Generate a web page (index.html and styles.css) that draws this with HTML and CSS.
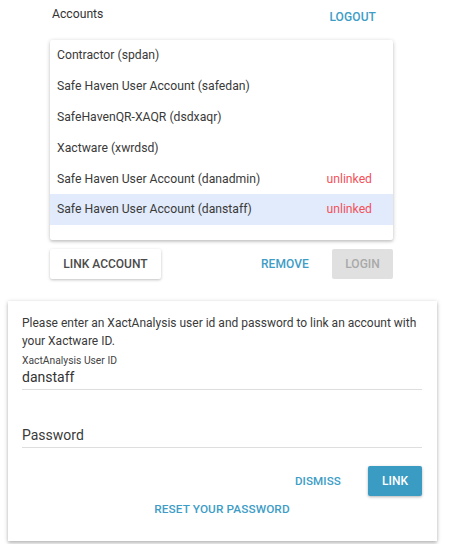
FILE: index.html
```html
<!DOCTYPE html>
<html>
<head>
<meta charset="utf-8">
<link rel="stylesheet" href="styles.css">
</head>
<body>
<div class="accounts">
  <div class="header">
    <span class="title">Accounts</span>
    <span class="link-btn logout">LOGOUT</span>
  </div>
  <div class="list">
    <div class="row"><span>Contractor (spdan)</span></div>
    <div class="row"><span>Safe Haven User Account (safedan)</span></div>
    <div class="row"><span>SafeHavenQR-XAQR (dsdxaqr)</span></div>
    <div class="row"><span>Xactware (xwrdsd)</span></div>
    <div class="row"><span>Safe Haven User Account (danadmin)</span><span class="unlinked">unlinked</span></div>
    <div class="row selected"><span>Safe Haven User Account (danstaff)</span><span class="unlinked">unlinked</span></div>
  </div>
  <div class="actions">
    <span class="raised">LINK ACCOUNT</span>
    <span class="spacer"></span>
    <span class="link-btn remove">REMOVE</span>
    <span class="disabled">LOGIN</span>
  </div>
</div>
<div class="dialog">
  <p class="intro">Please enter an XactAnalysis user id and password to link an account with your Xactware ID.</p>
  <div class="field">
    <div class="label">XactAnalysis User ID</div>
    <div class="value">danstaff</div>
  </div>
  <div class="field pw">
    <div class="value placeholder">Password</div>
  </div>
  <div class="dialog-actions">
    <span class="link-btn dismiss">DISMISS</span>
    <span class="primary">LINK</span>
  </div>
  <div class="reset"><span class="link-btn">RESET YOUR PASSWORD</span></div>
</div>
</body>
</html>
```
FILE: styles.css
```css
* { box-sizing: border-box; }
html, body { margin: 0; padding: 0; background: #fff; }
body {
  width: 450px;
  height: 544px;
  font-family: Roboto, "Liberation Sans", sans-serif;
  color: #3a3a3a;
  font-size: 12px;
  overflow: hidden;
}
.accounts {
  margin-left: 50px;
  width: 343px;
}
.header {
  height: 40px;
  display: flex;
  justify-content: space-between;
  padding: 7px 17px 0 2px;
}
.title { font-size: 12.2px; color: #333; }
.link-btn {
  color: #3d9dc6;
  font-weight: 500;
  font-size: 12px;
  letter-spacing: 0.1px;
}
.logout { padding-top: 3px; }
.list {
  height: 200px;
  background: #fff;
  box-shadow: 0 1px 4px rgba(0,0,0,0.22), 0 2px 2px rgba(0,0,0,0.08);
  border-radius: 2px;
}
.row {
  height: 30.8px;
  display: flex;
  align-items: center;
  justify-content: space-between;
  padding: 0 21px 0 7px;
  font-size: 12.2px;
  color: #3a3a3a;
}
.row.selected { background: #e2ebfb; }
.unlinked { color: #f2515b; }
.actions {
  margin-top: 9px;
  display: flex;
  align-items: center;
  height: 30px;
}
.raised {
  width: 111px;
  height: 30px;
  display: flex;
  align-items: center;
  justify-content: center;
  font-weight: 500;
  font-size: 12px;
  color: #4a4a4a;
  background: #fff;
  border-radius: 2px;
  box-shadow: 0 1px 3px rgba(0,0,0,0.25);
}
.spacer { flex: 1; }
.remove { margin-right: 23px; }
.disabled {
  width: 61px;
  height: 30px;
  display: flex;
  align-items: center;
  justify-content: center;
  font-weight: 500;
  font-size: 12px;
  color: #a9a9a9;
  background: #e0e0e0;
  border-radius: 2px;
}
.dialog {
  margin: 22px 0 0 8px;
  width: 429px;
  height: 240px;
  background: #fff;
  box-shadow: 0 1px 4px rgba(0,0,0,0.25), 0 3px 3px rgba(0,0,0,0.1);
  padding: 13px 14px 0 14px;
}
.intro {
  margin: 0;
  font-size: 12px;
  line-height: 18px;
  color: #3a3a3a;
}
.field {
  border-bottom: 1px solid #dedede;
  margin-right: 1px;
}
.label {
  margin-top: 5px;
  font-size: 10.3px;
  color: #444;
  line-height: 12px;
}
.value {
  font-size: 14px;
  color: #333;
  line-height: 20px;
  padding-bottom: 2px;
}
.pw { margin-top: 35px; }
.placeholder { font-size: 14px; color: #3a3a3a; }
.dialog-actions {
  margin-top: 18px;
  display: flex;
  justify-content: flex-end;
  align-items: center;
  height: 30px;
  padding-right: 1px;
}
.dismiss { margin-right: 27px; font-size: 11.6px; }
.primary {
  width: 54px;
  height: 30px;
  display: flex;
  align-items: center;
  justify-content: center;
  color: #fff;
  background: #3a9bc3;
  font-weight: 500;
  font-size: 12px;
  border-radius: 2px;
  box-shadow: 0 1px 3px rgba(0,0,0,0.3);
}
.reset {
  margin-top: 6px;
  text-align: center;
  padding-right: 1px;
}
.reset .link-btn { font-size: 11.8px; }
```
